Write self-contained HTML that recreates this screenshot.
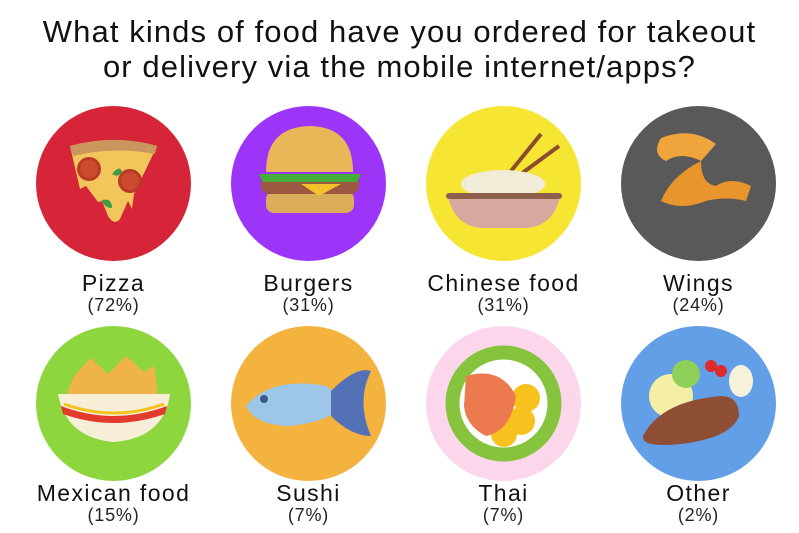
<!DOCTYPE html>
<html><head><style>
body{margin:0;width:799px;height:533px;background:#fff;font-family:"Liberation Sans",sans-serif;color:#111;overflow:hidden;position:relative}
.t{position:absolute;top:14px;left:0;width:799px;text-align:center;font-size:31px;line-height:35px;letter-spacing:1.1px;white-space:nowrap}
.c{position:absolute;width:155px;height:155px}
.l{position:absolute;width:195px;text-align:center;font-size:23px;line-height:24px;letter-spacing:1.4px;white-space:nowrap}
.s{font-size:18px;line-height:21px;color:#222;letter-spacing:0.8px}
</style></head><body>
<div class="t">What kinds of food have you ordered for takeout<br>or delivery via the mobile internet/apps?</div>

<svg class="c" style="left:36px;top:106px" viewBox="0 0 155 155"><circle cx="77.5" cy="77.5" r="77.5" fill="#d62438"/>
<path d="M34 40 Q78 28 121 40 L98 88 L96 103 L92 95 L84 113 Q78 120 72 110 L66 95 L62 96 L50 80 L44 83 Z" fill="#f2c65a"/>
<path d="M34 40 Q78 28 121 40 L119 48 Q78 40 37 50 Z" fill="#c9975e"/>
<circle cx="53" cy="63" r="12" fill="#b93a25"/><circle cx="53" cy="63" r="9" fill="#cc4a30"/>
<circle cx="94" cy="75" r="12" fill="#b93a25"/><circle cx="94" cy="75" r="9" fill="#cc4a30"/>
<path d="M76 68 q8-10 10-2 q-4 6-10 2z M66 94 q10 -2 10 8 q-8 0-10-8z" fill="#3d9a45"/>
</svg>
<svg class="c" style="left:231px;top:106px" viewBox="0 0 155 155"><circle cx="77.5" cy="77.5" r="77.5" fill="#9d35f9"/>
<rect x="35" y="85" width="88" height="22" rx="8" fill="#dcad58"/>
<rect x="30" y="68" width="98" height="20" rx="8" fill="#9c5740"/>
<path d="M28 68 h102 l-4 8 h-94z" fill="#45ad3a"/>
<path d="M70 78 l40 0 l-22 12z" fill="#f5c02c"/>
<path d="M35 66 Q35 21 79 20 Q122 21 122 66 Z" fill="#e8b858"/>
</svg>
<svg class="c" style="left:426px;top:106px" viewBox="0 0 155 155"><circle cx="77.5" cy="77.5" r="77.5" fill="#f6e532"/>
<path d="M85 65 L115 28 M95 68 L133 40" stroke="#8a4c2c" stroke-width="4"/>
<ellipse cx="77" cy="78" rx="42" ry="14" fill="#f1ecd8"/>
<path d="M22 90 h112 Q128 120 100 122 h-44 Q28 120 22 90z" fill="#d7a8a0"/>
<rect x="20" y="87" width="116" height="6" rx="3" fill="#8e5e4c"/>
</svg>
<svg class="c" style="left:621px;top:106px" viewBox="0 0 155 155"><circle cx="77.5" cy="77.5" r="77.5" fill="#5a5959"/>
<path d="M40 32 Q70 20 95 38 L80 55 Q60 45 45 55 Q30 48 40 32z" fill="#f0a43c"/>
<path d="M80 55 Q50 70 40 95 Q60 105 85 95 Q105 90 125 95 L130 80 Q110 70 95 80 Q80 78 80 55z" fill="#e8952e"/>
</svg>

<svg class="c" style="left:36px;top:326px" viewBox="0 0 155 155"><circle cx="77.5" cy="77.5" r="77.5" fill="#8ed63e"/>
<path d="M38 50 L55 32 L72 48 L90 30 L108 46 L118 40 L122 70 H30z" fill="#f0b34a"/>
<path d="M22 68 H134 Q128 112 78 116 Q30 112 22 68z" fill="#f7eed8"/>
<path d="M25 80 Q78 100 131 80 L129 88 Q78 106 27 88z" fill="#e23b2d"/>
<path d="M28 78 Q78 96 128 78" stroke="#f3c21d" stroke-width="3" fill="none"/>
</svg>
<svg class="c" style="left:231px;top:326px" viewBox="0 0 155 155"><circle cx="77.5" cy="77.5" r="77.5" fill="#f4b23f"/>
<path d="M15 80 Q40 50 95 60 Q110 70 110 80 Q100 95 60 100 Q25 100 15 80z" fill="#9cc7e8"/>
<path d="M100 65 Q125 40 140 45 Q125 75 140 110 Q120 110 100 90z" fill="#5470b6"/>
<circle cx="33" cy="73" r="4" fill="#3b5a8a"/>
</svg>
<svg class="c" style="left:426px;top:326px" viewBox="0 0 155 155"><circle cx="77.5" cy="77.5" r="77.5" fill="#fcd6ea"/>
<circle cx="77.5" cy="77.5" r="58" fill="#86c43e"/><circle cx="77.5" cy="77.5" r="44" fill="#fff"/>
<circle cx="100" cy="72" r="14" fill="#f7c21e"/><circle cx="95" cy="95" r="14" fill="#f7c21e"/><circle cx="78" cy="108" r="13" fill="#f7c21e"/>
<path d="M40 50 Q75 40 90 70 Q85 105 60 110 Q40 100 38 80z" fill="#ec7a4e"/>
</svg>
<svg class="c" style="left:621px;top:326px" viewBox="0 0 155 155"><circle cx="77.5" cy="77.5" r="77.5" fill="#629fe6"/>
<circle cx="50" cy="70" r="22" fill="#f4efa4"/><circle cx="65" cy="48" r="14" fill="#8fd05a"/>
<circle cx="90" cy="40" r="6" fill="#dd2a2a"/><circle cx="100" cy="45" r="6" fill="#dd2a2a"/>
<ellipse cx="120" cy="55" rx="12" ry="16" fill="#f7f1dc"/>
<path d="M22 110 Q40 75 100 70 Q118 70 118 90 Q110 112 60 118 Q20 122 22 110z" fill="#8e4f36"/>
</svg>

<div class="l" style="left:16px;top:271px">Pizza<div class="s">(72%)</div></div>
<div class="l" style="left:211px;top:271px">Burgers<div class="s">(31%)</div></div>
<div class="l" style="left:406px;top:271px">Chinese food<div class="s">(31%)</div></div>
<div class="l" style="left:601px;top:271px">Wings<div class="s">(24%)</div></div>
<div class="l" style="left:16px;top:481px">Mexican food<div class="s">(15%)</div></div>
<div class="l" style="left:211px;top:481px">Sushi<div class="s">(7%)</div></div>
<div class="l" style="left:406px;top:481px">Thai<div class="s">(7%)</div></div>
<div class="l" style="left:601px;top:481px">Other<div class="s">(2%)</div></div>
</body></html>
